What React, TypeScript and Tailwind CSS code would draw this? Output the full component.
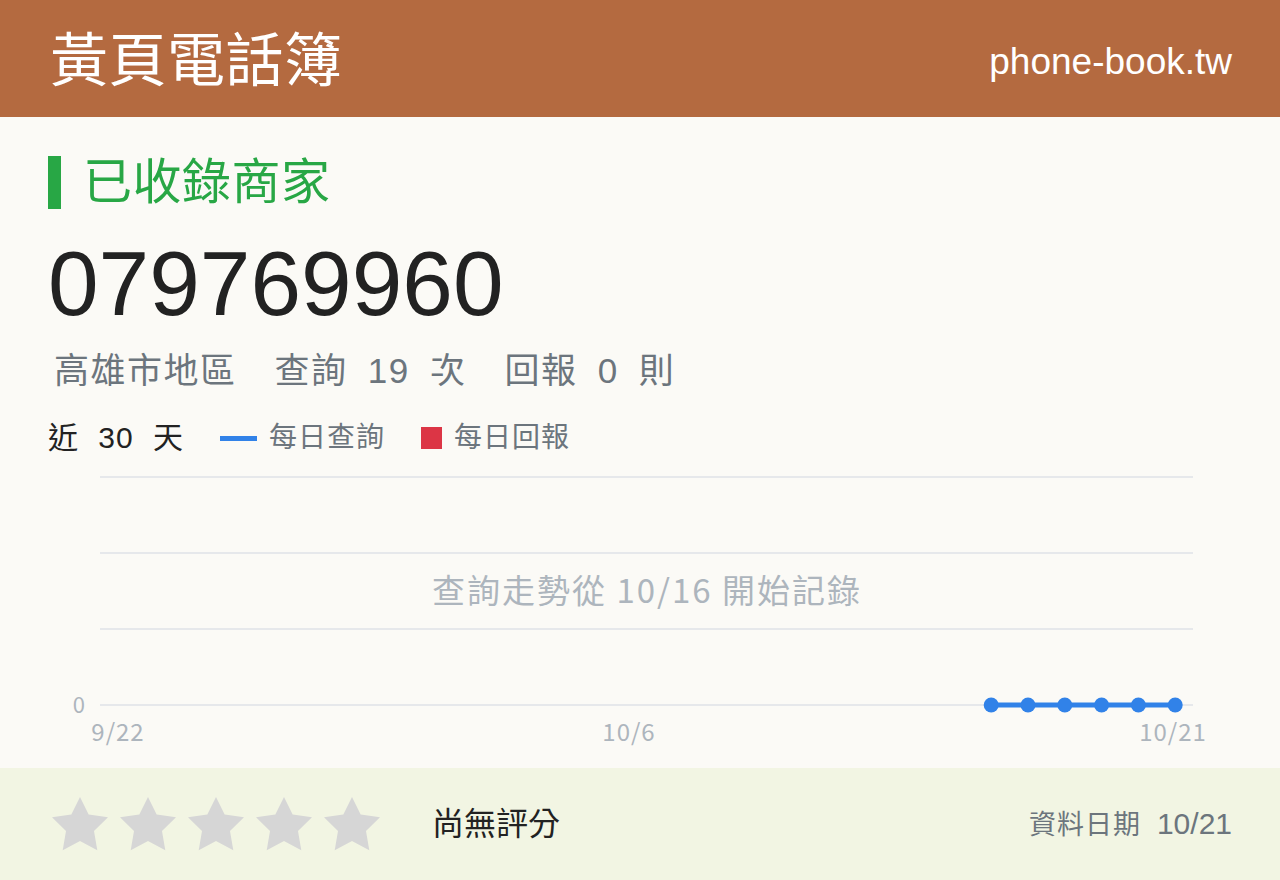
const font = "font-['Liberation_Sans','Noto_Sans_CJK_TC',sans-serif]";

// 30 days, 9/22 .. 10/21; records start at index 24 (10/16)
const days = 30;
const startIdx = 24;
const xAt = (i: number) => 108 + i * 36.8;
const gridYs = [16, 92, 168, 244];

const Star = () => (
  <svg width="56" height="54" viewBox="2 2 20 19.3" className="block">
    <path
      d="M12 2l3.09 6.26L22 9.27l-5 4.87 1.18 6.88L12 17.77l-6.18 3.25L7 14.14 2 9.27l6.91-1.01L12 2z"
      fill="#d6d6d6"
    />
  </svg>
);

const TrendChart = () => {
  const pts = Array.from({ length: days - startIdx }, (_, k) => xAt(startIdx + k));
  return (
    <svg width="1280" height="300" className="block">
      {gridYs.map((y) => (
        <line key={y} x1="100" x2="1193" y1={y} y2={y} stroke="#e6e8eb" strokeWidth="2" />
      ))}
      <text x="85" y="252" textAnchor="end" fill="#adb5bd" fontSize="22" fontFamily="Noto Sans CJK TC, sans-serif">
        0
      </text>
      <text
        x="647"
        y="142"
        textAnchor="middle"
        fill="#adb5bd"
        fontSize="33"
        letterSpacing="2"
        fontFamily="Noto Sans CJK TC, sans-serif"
      >
        查詢走勢從 10/16 開始記錄
      </text>
      {[
        { label: "9/22", x: 118 },
        { label: "10/6", x: 629 },
        { label: "10/21", x: 1173 },
      ].map((t) => (
        <text
          key={t.label}
          x={t.x}
          y="280"
          textAnchor="middle"
          fill="#adb5bd"
          fontSize="24"
          letterSpacing="1"
          fontFamily="Noto Sans CJK TC, sans-serif"
        >
          {t.label}
        </text>
      ))}
      <polyline
        points={pts.map((x) => `${x},244`).join(" ")}
        fill="none"
        stroke="#3182e8"
        strokeWidth="5"
      />
      {pts.map((x) => (
        <circle key={x} cx={x} cy="244" r="7.5" fill="#3182e8" />
      ))}
    </svg>
  );
};

export default function App() {
  return (
    <div className={`w-[1280px] h-[880px] flex flex-col bg-[#fbfaf6] ${font}`}>
      <header className="h-[117px] shrink-0 bg-[#b46a40] flex items-center justify-between pl-[50px] pr-[48px] pt-[5px]">
        <h1 className="text-white text-[58px] leading-none tracking-[0.5px]">黃頁電話簿</h1>
        <span className="text-white text-[37px] leading-none">phone-book.tw</span>
      </header>

      <main className="flex-1 flex flex-col">
        <div className="px-12">
          <div className="mt-[39px] flex items-center h-[53px]">
            <div className="w-[13px] h-[53px] bg-[#28a745]" />
            <h2 className="ml-[22px] text-[#28a745] text-[49px] leading-none tracking-[0.5px]">已收錄商家</h2>
          </div>
          <div className="mt-[35px] text-[#222] text-[91px] leading-[80px] h-[80px]">079769960</div>
          <div className="mt-[29px] flex items-center text-[#6c757d] text-[35px] leading-none tracking-[1.5px] [word-spacing:9px] pl-[6px]">
            <span>高雄市地區</span>
            <span className="ml-[38px]">查詢 19 次</span>
            <span className="ml-[38px]">回報 0 則</span>
          </div>
          <div className="mt-[35px] flex items-center text-[28px] leading-none">
            <span className="text-[#222] text-[30px] tracking-[1px] [word-spacing:10px]">近 30 天</span>
            <span className="ml-[36px] w-[37px] h-[5px] bg-[#3182e8]" />
            <span className="ml-[12px] text-[#6c757d] tracking-[1px]">每日查詢</span>
            <span className="ml-[36px] w-[21px] h-[22px] bg-[#dc3545]" />
            <span className="ml-[12px] text-[#6c757d] tracking-[1px]">每日回報</span>
          </div>
        </div>
        <div className="mt-[8px]">
          <TrendChart />
        </div>
      </main>

      <footer className="h-[112px] shrink-0 bg-[#f2f5e3] flex items-center pl-[52px] pr-[48px]">
        <div className="flex items-center gap-[12px]">
          {[0, 1, 2, 3, 4].map((i) => (
            <Star key={i} />
          ))}
        </div>
        <span className="ml-[52px] text-[#222] text-[32px] leading-none">尚無評分</span>
        <div className="ml-auto flex items-baseline text-[#6c757d] leading-none">
          <span className="text-[27px] tracking-[1px]">資料日期</span>
          <span className="ml-[16px] text-[30px]">10/21</span>
        </div>
      </footer>
    </div>
  );
}
